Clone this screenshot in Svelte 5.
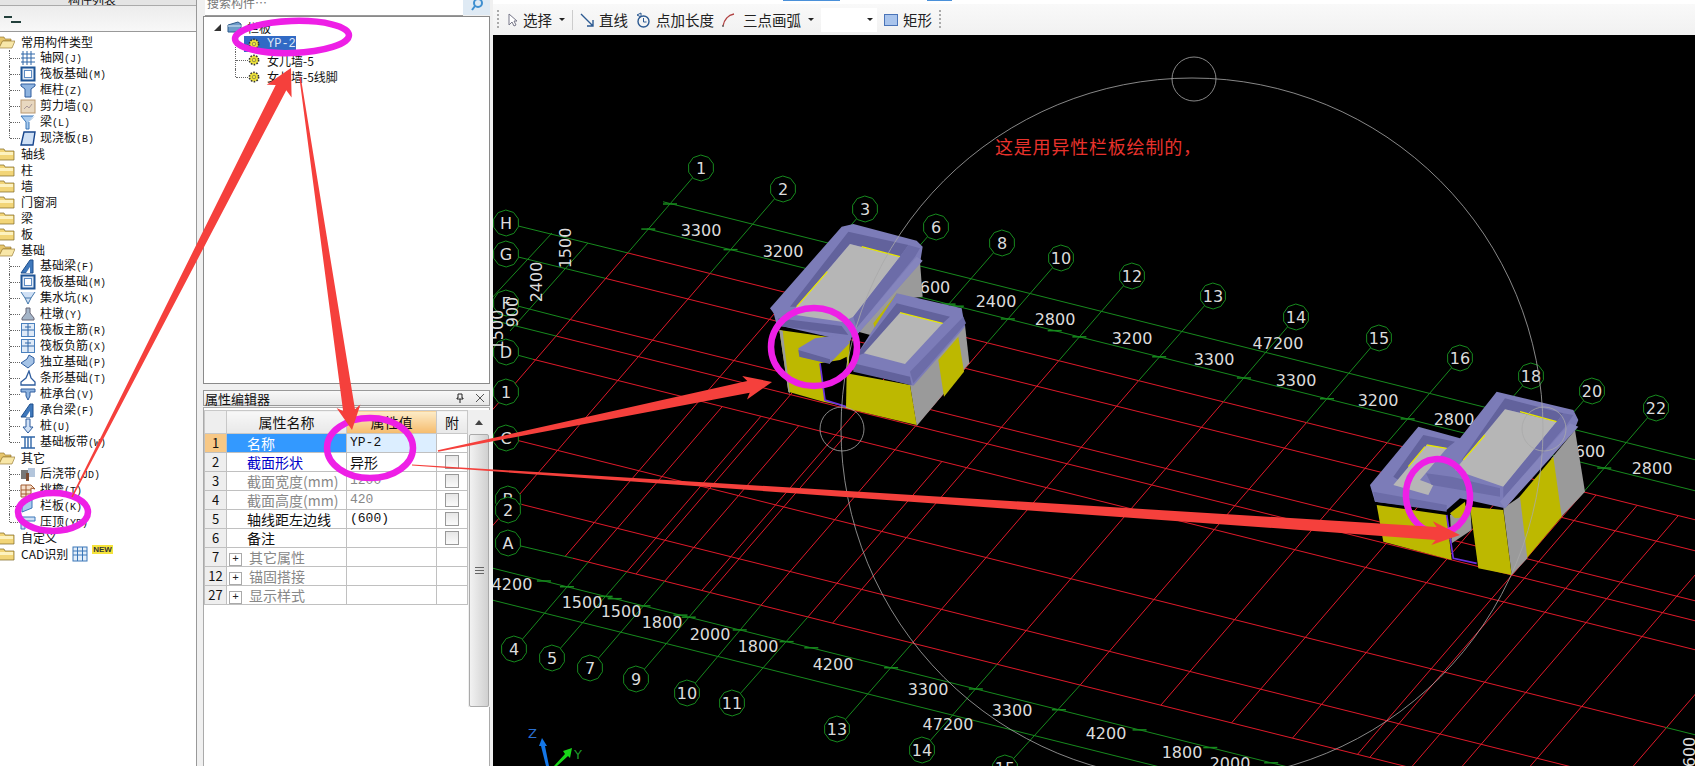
<script>
  const icons = {
    grid: '<path d="M3 1v14M7 1v14M11 1v14M1 4h14M1 8h14M1 12h14" stroke="#2f66a8" fill="none"/>',
    raft: '<rect x="1.5" y="1.5" width="13" height="13" fill="#dfe9f5" stroke="#1f5596" stroke-width="2"/><rect x="4.5" y="4.5" width="7" height="7" fill="#fff" stroke="#5d8cc4"/>',
    column: '<path d="M1 2h14v2l-4 3v8H5V7L1 4z" fill="#8fb4e0" stroke="#2f5d9e"/>',
    wall: '<rect x="1" y="2" width="14" height="13" fill="#e8d8c0" stroke="#b89870"/><path d="M4 11l3-3 2 2 3-4" stroke="#a99" fill="none"/>',
    beam: '<path d="M1 2h13L9 8v7H6V8z" fill="#a9cbee" stroke="#3a77b8"/><path d="M14 2L9 8" stroke="#fff"/>',
    slab: '<path d="M4 2h11l-2 13H1z" fill="#cfe0f5" stroke="#17458c" stroke-width="1.4"/>',
    fbeam: '<path d="M1 15L10 2h3v13z" fill="#3f78bb" stroke="#1f4f8c"/><path d="M6 15l4-6v6z" fill="#fff"/>',
    pit: '<path d="M1 2l4 6h6l4-6M5 8l3 6 3-6" fill="#cfe0f5" stroke="#4477aa"/>',
    pier: '<path d="M6 2h4v5l4 5v2H2v-2l4-5z" fill="#a5b5c8" stroke="#667"/>',
    rebar: '<rect x="1.5" y="1.5" width="13" height="13" fill="#dfeaf7" stroke="#4a80bd"/><path d="M8 2v12M2 8h12M5 5h6" stroke="#2f66a8" fill="none"/>',
    footing: '<path d="M1 9l6-4 2-4 5 3v5l-6 5z" fill="#a5c3e6" stroke="#2f5d9e"/>',
    strip: '<path d="M1 15v-3l5-4 3-7 2 7 4 4v3z" fill="#fff" stroke="#2f5d9e" stroke-width="1.3"/>',
    cap: '<path d="M1 3h14v3H10v4l-2 4-2-4V6H1z" fill="#8fb4e0" stroke="#2f5d9e"/>',
    pile: '<path d="M6 1h4v8h3l-5 6-5-6h3z" fill="#cfe0f5" stroke="#2f5d9e"/>',
    band: '<path d="M1 3h14M1 14h14M5 3v11M8 3v11M11 3v11" stroke="#2f66a8" fill="none" stroke-width="1.4"/>',
    pour: '<rect x="1" y="4" width="7" height="9" fill="#777"/><rect x="8" y="2" width="7" height="9" fill="#b4c6dc"/><rect x="6" y="7" width="3" height="8" fill="#7a4a30"/>',
    eave: '<path d="M1 3h10l4 4-4-1v9H1z" fill="#f6e0cc" stroke="#a05a30"/><path d="M1 8h10M1 12h10M6 3v12" stroke="#a05a30"/>',
    rail: '<path d="M2 14V6l10-4v8z" fill="#a9cbee" stroke="#3a77b8"/>',
    coping: '<path d="M1 3h14v4H5v8H1z" fill="#cfe0f5" stroke="#3a77b8"/>'
  };

  const tree = [
    { name: '常用构件类型', open: true, kids: [
      ['轴网', 'J', 'grid'], ['筏板基础', 'M', 'raft'], ['框柱', 'Z', 'column'],
      ['剪力墙', 'Q', 'wall'], ['梁', 'L', 'beam'], ['现浇板', 'B', 'slab']
    ] },
    { name: '轴线' }, { name: '柱' }, { name: '墙' }, { name: '门窗洞' }, { name: '梁' }, { name: '板' },
    { name: '基础', open: true, kids: [
      ['基础梁', 'F', 'fbeam'], ['筏板基础', 'M', 'raft'], ['集水坑', 'K', 'pit'], ['柱墩', 'Y', 'pier'],
      ['筏板主筋', 'R', 'rebar'], ['筏板负筋', 'X', 'rebar'], ['独立基础', 'P', 'footing'], ['条形基础', 'T', 'strip'],
      ['桩承台', 'V', 'cap'], ['承台梁', 'F', 'fbeam'], ['桩', 'U', 'pile'], ['基础板带', 'W', 'band']
    ] },
    { name: '其它', open: true, kids: [
      ['后浇带', 'JD', 'pour'], ['挑檐', 'T', 'eave'], ['栏板', 'K', 'rail'], ['压顶', 'YD', 'coping']
    ] },
    { name: '自定义' }
  ];

  const props = [
    { no: 1, name: '名称', value: 'YP-2', sel: true },
    { no: 2, name: '截面形状', value: '异形', blue: true, check: true },
    { no: 3, name: '截面宽度(mm)', value: '1200', grey: true, check: true },
    { no: 4, name: '截面高度(mm)', value: '420', grey: true, check: true },
    { no: 5, name: '轴线距左边线', value: '(600)', check: true },
    { no: 6, name: '备注', value: '', check: true },
    { no: 7, name: '其它属性', plus: true },
    { no: 12, name: '锚固搭接', plus: true },
    { no: 27, name: '显示样式', plus: true }
  ];

  // grid geometry: every line is read off the reference in page pixels
  const SLOPE = 1.16;
  const atC = (x560, c) => {
    const y = (c + 0.25 * (x560 + 560 / SLOPE - 1000)) / (1 + 0.25 / SLOPE);
    return [x560 - (y - 560) / SLOPE, y];
  };
  const hy = (c, x) => c + 0.25 * (x - 1000);

  const axes = [
    { n: '1', x: 363, top: [701, 168] }, { n: '2', x: 463, top: [783, 189] },
    { n: '3', x: 562, top: [865, 209] }, { n: '4', x: 590, bot: [514, 649] },
    { n: '5', x: 637, bot: [552, 658] }, { n: '6', x: 648, top: [936, 227] },
    { n: '7', x: 683, bot: [590, 668] }, { n: '8', x: 728, top: [1002, 243] },
    { n: '9', x: 738, bot: [636, 679] }, { n: '10', x: 800, top: [1061, 258], bot: [687, 693] },
    { n: '11', x: 857, bot: [732, 703] }, { n: '12', x: 887, top: [1132, 276] },
    { n: '13', x: 984, top: [1213, 296], bot: [837, 729] }, { n: '14', x: 1087, top: [1296, 317], bot: [922, 750] },
    { n: '15', x: 1188, top: [1379, 338], bot: [1005, 768] }, { n: '16', x: 1286, top: [1460, 358] },
    { n: '18', x: 1372, top: [1531, 376] }, { n: '20', x: 1446, top: [1592, 391] },
    { n: '22', x: 1525, top: [1656, 408] }, { x: 1540 }, { x: 1590 }, { x: 1640 }, { x: 1708 }, { x: 1811 }
  ];

  const rows = [
    { c: 346, from: 627, b: ['H', 506, 223] }, { c: 377, from: 605, b: ['G', 506, 254] },
    { c: 427, from: 570, b: ['F', 506, 303] }, { c: 447, from: 557, start: 493 },
    { c: 476, from: 533, b: ['D', 506, 352] }, { c: 561, from: 510, to: 1665, b: ['C', 506, 438] },
    { c: 624, from: 522, b: ['B', 508, 499] }, { c: 665, from: 573, b: ['A', 508, 543] }
  ];

  const reds = [];
  const greens = [];
  for (const a of axes) {
    const p = atC(a.x, a.top || a.x > 1530 ? 346 : 476);
    const q = atC(a.x, 665);
    reds.push([p, q]);
    if (a.top) greens.push([a.top, p]);
    if (a.bot) greens.push([q, a.bot]);
  }
  for (const r of rows) {
    const end = r.to ?? 1700;
    reds.push([[r.from, hy(r.c, r.from)], [end, hy(r.c, end)]]);
    if (r.to) greens.push([[r.to, hy(r.c, r.to)], [1700, hy(r.c, 1700)]]);
    if (r.b) greens.push([[r.b[1], r.b[2]], [r.from, hy(r.c, r.from)]]);
    else greens.push([[r.start, hy(r.c, r.start)], [r.from, hy(r.c, r.from)]]);
  }
  for (const [c, from] of [[286, 663], [317, 647], [695, 493], [727, 493]]) {
    greens.push([[from, hy(c, from)], [1700, hy(c, 1700)]]);
  }
  greens.push([[552, 233], [490, 300]], [[588, 243], [510, 331]]);

  const ticks = [[670, 204]];
  for (const a of axes) {
    for (const c of [317, 695]) {
      const [x, y] = atC(a.x, c);
      if (y < 766 && x > 493 && (a.top || a.bot)) ticks.push([x, y]);
    }
  }

  const bubbles = [
    ...axes.filter(a => a.top).map(a => ({ t: a.n, x: a.top[0], y: a.top[1] })),
    ...axes.filter(a => a.bot).map(a => ({ t: a.n, x: a.bot[0], y: a.bot[1] })),
    ...rows.filter(r => r.b).map(r => ({ t: r.b[0], x: r.b[1], y: r.b[2] })),
    { t: '2', x: 508, y: 510 }, { t: '1', x: 506, y: 392 }
  ];
  const ring = (x, y, r = 13) =>
    Array.from({ length: 10 }, (_, i) => {
      const t = (i / 10) * Math.PI * 2 + 0.3;
      return `${(x + r * Math.cos(t)).toFixed(1)},${(y + r * Math.sin(t)).toFixed(1)}`;
    }).join(' ');

  const dims = [
    ['3300', 701, 230], ['3200', 783, 251], ['600', 935, 287], ['2400', 996, 301], ['2800', 1055, 319],
    ['3200', 1132, 338], ['3300', 1214, 359], ['47200', 1278, 343], ['3300', 1296, 380], ['3200', 1378, 400],
    ['2800', 1454, 419], ['600', 1590, 451], ['2800', 1652, 468], ['4200', 512, 584], ['1500', 582, 602],
    ['1500', 621, 611], ['1800', 662, 622], ['2000', 710, 634], ['1800', 758, 646], ['4200', 833, 664],
    ['3300', 928, 689], ['47200', 948, 724], ['3300', 1012, 710], ['4200', 1106, 733], ['1800', 1182, 752],
    ['2000', 1230, 763]
  ];
  const sideDims = [['1500', 565, 248], ['2400', 536, 282], ['900', 512, 312], ['1500', 497, 330], ['600', 1689, 752]];

  // tapered annotation arrow, tail to tip
  const arrow = (x1, y1, x2, y2, tail, shaft, head, len) => {
    const d = Math.hypot(x2 - x1, y2 - y1);
    const ux = (x2 - x1) / d, uy = (y2 - y1) / d;
    const nx = -uy, ny = ux;
    const bx = x2 - ux * len, by = y2 - uy * len;
    const pt = (x, y, w) => `${(x + nx * w).toFixed(1)},${(y + ny * w).toFixed(1)}`;
    return [pt(x1, y1, tail / 2), pt(bx, by, shaft / 2), pt(bx - ux * 4, by - uy * 4, head / 2), `${x2},${y2}`,
      pt(bx - ux * 4, by - uy * 4, -head / 2), pt(bx, by, -shaft / 2), pt(x1, y1, -tail / 2)].join(' ');
  };
  const arrows = [
    arrow(72, 497, 291, 68, 1.5, 12, 28, 22),
    arrow(300, 77, 352, 430, 1.5, 12, 24, 20),
    arrow(438, 451, 772, 382, 1.5, 12, 24, 24),
    arrow(412, 465, 1460, 535, 1, 13, 24, 24)
  ];
</script>

{#snippet folder(open)}
  <svg class="folder" viewBox="0 0 16 14" width="16" height="14">
    {#if open}
      <path d="M0 2h5l1 2h6v2H4L1 12H0z" fill="#e6c66e" stroke="#8a6a20" stroke-width=".6" />
      <path d="M3.500 6H16l-3 7H0z" fill="#f8e7a8" stroke="#8a6a20" stroke-width=".6" />
    {:else}
      <path d="M0 2h5l1 2h9v9H0z" fill="#f2d578" stroke="#7d6420" stroke-width=".7" />
      <path d="M1 5h13v3H1z" fill="#fdf2c0" />
    {/if}
  </svg>
{/snippet}

{#snippet gear()}
  <svg class="gear" viewBox="0 0 12 12" width="12" height="12">
    <circle cx="6" cy="6" r="4.600" fill="#f3e83a" stroke="#333" stroke-width="1.600" stroke-dasharray="1.600 1.300" />
    <circle cx="6" cy="6" r="1.800" fill="#f3e83a" stroke="#555" stroke-width=".6" />
  </svg>
{/snippet}

<div class="page">
  <aside class="side">
    <div class="side-head"><span>构件列表</span></div>
    <div class="side-tool">
      <svg viewBox="0 0 18 10" width="18" height="10"><path d="M0 2h8M7 7h10" stroke="#23403c" stroke-width="2" /></svg>
    </div>
    <div class="tree">
      {#each tree as group}
        <div class="row">{@render folder(group.open)}<span class="label">{group.name}</span></div>
        {#if group.kids}
          {#each group.kids as kid, i}
            <div class="row child">
              <i class="conn" class:last={i === group.kids.length - 1}></i>
              <svg class="ico" viewBox="0 0 16 16" width="16" height="16">{@html icons[kid[2]]}</svg>
              <span class="kid">{kid[0]}<span class="key">({kid[1]})</span></span>
            </div>
          {/each}
        {/if}
      {/each}
      <div class="row">
        {@render folder(false)}<span class="label">CAD识别</span>
        <svg class="cad" viewBox="0 0 16 16" width="16" height="16">
          <rect x="1" y="1" width="14" height="14" fill="#e4eef9" stroke="#3a77b8" />
          <path d="M5.500 1v14M10.500 1v14M1 5h14M1 9h14" stroke="#3a77b8" />
        </svg>
        <span class="new">NEW</span>
      </div>
    </div>
  </aside>

  <section class="mid">
    <div class="search">
      <div class="search-box"><span>搜索构件…</span></div>
      <div class="search-btn">
        <svg viewBox="0 0 14 14" width="14" height="14"><circle cx="8" cy="3" r="4" fill="none" stroke="#3f8fd0" stroke-width="2" /><path d="M5 6l-3 4" stroke="#3f8fd0" stroke-width="2" /></svg>
      </div>
    </div>
    <div class="parts">
      <div class="part head">
        <span class="tri"></span>
        <svg viewBox="0 0 16 13" width="16" height="13"><path d="M1 4l10-3 3 2v8H1z" fill="#6f9cc9" stroke="#2c5a8a" /><path d="M1 5h13" stroke="#dcecf9" /></svg>
        <span>栏板</span>
      </div>
      <div class="part leaf"><i class="conn"></i><span class="sel">{@render gear()}<b>YP-2</b></span></div>
      <div class="part leaf"><i class="conn"></i>{@render gear()}<span class="tx-leaf">女儿墙-5</span></div>
      <div class="part leaf"><i class="conn last"></i>{@render gear()}<span class="tx-leaf">女儿墙-5线脚</span></div>
    </div>

    <div class="prop-title">
      <span>属性编辑器</span>
      <span class="pin">
        <svg viewBox="0 0 10 10" width="10" height="10"><path d="M3 1h4v4h1v1H2V5h1zM5 6v4" stroke="#222" fill="none" /></svg>
        <svg viewBox="0 0 10 10" width="10" height="10"><path d="M1 1l8 8M9 1l-8 8" stroke="#555" /></svg>
      </span>
    </div>
    <div class="prop-body">
      <table>
        <thead>
          <tr><th class="no"></th><th class="pname">属性名称</th><th class="pval">属性值</th><th class="att">附</th></tr>
        </thead>
        <tbody>
          {#each props as p}
            <tr>
              <td class="no" class:on={p.sel}>{p.no}</td>
              <td class="name" class:picked={p.sel} class:blue={p.blue} class:grey={p.grey || p.plus}>
                {#if p.plus}<span class="plus">+</span>{/if}<span class="nm">{p.name}</span>
              </td>
              <td class="val" class:on={p.sel} class:grey={p.grey} class:cn={p.value === '异形'}>{p.value ?? ''}</td>
              <td class="att">{#if p.check}<span class="box"></span>{/if}</td>
            </tr>
          {/each}
        </tbody>
      </table>
      <div class="scroll">
        <div class="up"><span></span></div>
        <div class="thumb"><i></i><i></i><i></i></div>
      </div>
    </div>
  </section>

  <main class="view">
    <div class="tabs"><i class="t1"></i><i class="t2"></i></div>
    <div class="tools">
      <span class="grip"></span>
      <svg class="t-cursor" viewBox="0 0 10 14" width="10" height="14"><path d="M1 1v11l3-3 2 4 2-1-2-4h3z" fill="#fff" stroke="#778" /></svg>
      <span class="tx">选择</span><span class="caret"></span><span class="sep"></span>
      <svg viewBox="0 0 14 14" width="14" height="14"><path d="M1 1l12 12M13 7v6H7" stroke="#2c5a92" fill="none" stroke-width="1.400" /></svg>
      <span class="tx">直线</span>
      <svg viewBox="0 0 16 16" width="16" height="16"><circle cx="8.500" cy="9.500" r="5.500" fill="none" stroke="#2c5a92" stroke-width="1.400" /><path d="M8.500 6v4h3M2 3l4-2v4z" stroke="#2c5a92" fill="none" /></svg>
      <span class="tx">点加长度</span>
      <svg viewBox="0 0 14 14" width="14" height="14"><path d="M2 13C3 7 7 2 13 1" stroke="#b04040" fill="none" stroke-width="1.400" /><circle cx="2" cy="13" r="1" fill="#666" /></svg>
      <span class="tx wide">三点画弧</span><span class="caret"></span>
      <span class="drop"><span class="caret"></span></span>
      <svg viewBox="0 0 14 12" width="14" height="12"><rect x=".5" y=".5" width="13" height="11" fill="#a9c4ec" stroke="#4a74b8" /></svg>
      <span class="tx">矩形</span>
      <span class="grip"></span>
    </div>

    <svg class="cad-view" viewBox="493 35 1202 731" width="1202" height="731">
      {#each reds as [a, b]}<line class="red" x1={a[0]} y1={a[1]} x2={b[0]} y2={b[1]} />{/each}
      {#each greens as [a, b]}<line class="green" x1={a[0]} y1={a[1]} x2={b[0]} y2={b[1]} />{/each}
      {#each ticks as [x, y]}<line class="tick" x1={x - 7} y1={y} x2={x + 7} y2={y} />{/each}

      {#each bubbles as b}
        <polygon class="bubble" points={ring(b.x, b.y)} />
        <text class="dim" x={b.x} y={b.y + 6}>{b.t}</text>
      {/each}
      {#each dims as [t, x, y]}<text class="dim" x={x} y={y + 6}>{t}</text>{/each}
      {#each sideDims as [t, x, y]}<text class="dim" transform="translate({x} {y}) rotate(-90)" y="6">{t}</text>{/each}

      <!-- first building, coordinates from a 3x crop at (740,200) -->
      <g transform="translate(740 200) scale(.33333)">
        <polygon class="gray" points="355,395 540,185 548,290 470,300 410,410" />
        <polygon class="yellow" points="400,370 470,280 478,345 410,405" />
        <polygon class="purple" points="90,325 305,80 340,72 530,122 548,140 540,190 350,405 330,400 105,345" />
        <polygon class="dark" points="150,320 325,95 505,135 480,170 330,132 170,320" />
        <polygon class="floor" points="170,320 330,132 480,170 340,350 300,370 150,345" />
        <path class="ytrim" d="M365 140L480 170M170 320L262 215" />
        <polygon class="dark2" points="340,350 480,170 505,135 540,145 525,170 350,385" />
        <polygon class="purple2" points="345,390 530,170 548,182 350,405" />
        <polygon class="yellow" points="118,390 330,420 320,620 250,605 145,575" />
        <polygon class="gray" points="118,390 128,392 150,582 145,575" />
        <polygon class="black" points="240,490 300,480 320,470 330,622 255,600" />
        <path class="violet" d="M240 490L255 600L325 622" />
        <polygon class="purple" points="100,335 305,365 340,400 330,425 110,375" />
        <polygon class="dark" points="115,355 305,378 325,405 115,378" />
        <polygon class="purple" points="175,445 225,415 300,405 330,428 270,490 180,470" />
        <polygon class="dark" points="175,450 270,478 270,492 178,470" />

        <polygon class="gray" points="510,555 675,375 688,490 530,678" />
        <polygon class="yellow" points="595,480 655,410 672,515 612,590" />
        <polygon class="yellow" points="320,520 510,555 530,675 318,625" />
        <polygon class="purple" points="340,480 470,280 665,325 675,380 520,557 340,510" />
        <polygon class="dark" points="345,470 470,310 630,350 608,370 480,338 372,460" />
        <polygon class="floor" points="372,460 480,338 608,370 495,492" />
        <path class="ytrim" d="M480 338L608 370" />
        <polygon class="dark" points="340,490 510,530 515,555 340,515" />
        <polygon class="dark2" points="510,515 670,350 678,370 520,550" />
      </g>

      <!-- second building, coordinates from a 3x crop at (1340,370) -->
      <g transform="translate(1340 370) scale(.33333)">
        <polygon class="gray" points="635,265 705,180 735,365 660,445" />
        <polygon class="yellow" points="535,385 640,260 665,440 560,565" />
        <polygon class="gray" points="490,415 540,380 562,565 515,615" />
        <polygon class="yellow" points="390,410 490,420 515,615 415,595" />
        <polygon class="yellow" points="110,405 320,435 335,570 130,515" />
        <polygon class="gray" points="330,435 390,400 395,480 335,520" />
        <polygon class="yellow" points="330,430 375,395 380,440 345,445" />
        <path class="violet" d="M320 435L340 565L410 580" />
        <polygon class="purple" points="90,345 235,170 360,205 470,65 700,120 715,150 705,175 495,415 360,385 320,420 105,395" />
        <polygon class="dark" points="365,270 495,85 670,130 650,155 495,118 385,265" />
        <polygon class="dark" points="160,320 250,195 345,215 320,235 260,225 175,330" />
        <polygon class="floor" points="345,300 495,118 650,155 490,350" />
        <polygon class="floor" points="160,345 260,225 320,235 240,330 280,345 265,375" />
        <path class="ytrim" d="M540 125L650 155M260 225L320 235M370 270L435 195M205 290L255 230" />
        <polygon class="dark2" points="258,310 335,320 480,355 480,380 275,345" />
        <polygon class="dark2" points="100,365 320,405 320,425 105,395" />
        <polygon class="dark2" points="490,350 650,155 670,130 700,135 680,165 490,385" />
        <polygon class="purple2" points="480,395 690,160 715,170 495,415" />
      </g>

      <circle class="arc" cx="1192" cy="429" r="351" />
      <circle class="arc" cx="1194" cy="79" r="22" />
      <circle class="arc" cx="1544" cy="429" r="22" />
      <circle class="arc" cx="842" cy="429" r="22" />

      <text class="note" x="995" y="154">这是用异性栏板绘制的，</text>

      <path class="z" d="M542 738l-3 8h2l5 20h3l-4-20h2z" />
      <path class="y" d="M572 748l-9 3 2 3-11 12h3l11-10 2 2z" />
      <text class="zl" x="528" y="738">Z</text>
      <text class="yl" x="574" y="759">Y</text>
    </svg>
  </main>

  <svg class="marks" viewBox="0 0 1695 766" width="1695" height="766">
    <ellipse class="ring" cx="292" cy="37" rx="57" ry="16" transform="rotate(-2 292 37)" />
    <ellipse class="ring" cx="370" cy="448" rx="43" ry="30" />
    <ellipse class="ring" cx="53" cy="512" rx="35" ry="19" />
    <ellipse class="ring" cx="814" cy="347" rx="43" ry="39" />
    <ellipse class="ring" cx="1438" cy="496" rx="32" ry="37" transform="rotate(-5 1438 496)" />
    {#each arrows as a}<polygon class="shot" points={a} />{/each}
  </svg>
</div>

<style>
  :global(body) {
    margin: 0;
    background: #f0f0f0;
  }

  .page {
    position: relative;
    display: flex;
    width: 1695px;
    height: 766px;
    overflow: hidden;
    background: #f0f0f0;
    font-family: "Noto Sans CJK SC", sans-serif;
    font-size: 12px;
    color: #111;
  }

  .side {
    flex: none;
    width: 197px;
    display: flex;
    flex-direction: column;
    box-sizing: border-box;
    border-right: 1px solid #999;
  }
  .side-head {
    height: 5px;
    padding-left: 68px;
    overflow: hidden;
    border-bottom: 1px solid #aaa;
    line-height: 0;
    margin-bottom: 0;
    background: #e4e4e4;
  }
  .side-tool {
    flex: none;
    height: 26px;
    display: flex;
    align-items: center;
    padding: 3px 0 0 4px;
    box-sizing: border-box;
    border-bottom: 1px solid #999;
    background: linear-gradient(#ececec, #f8f8f8);
  }
  .tree {
    flex: 1;
    background: #fff;
    padding-top: 2px;
  }
  .row {
    display: flex;
    align-items: center;
    height: 16px;
    line-height: 16px;
    white-space: nowrap;
  }
  .folder {
    flex: none;
    margin-left: -1px;
  }
  .label {
    margin-left: 6px;
  }
  .child {
    padding-left: 9px;
  }
  .conn {
    position: relative;
    flex: none;
    align-self: stretch;
    width: 10px;
    border-left: 1px dotted #666;
  }
  .conn::after {
    content: "";
    position: absolute;
    left: 0;
    right: 0;
    top: 8px;
    border-top: 1px dotted #666;
  }
  .conn.last {
    align-self: flex-start;
    height: 8px;
  }
  .ico {
    flex: none;
  }
  .kid {
    margin-left: 4px;
  }
  .key {
    font-family: "Liberation Mono", monospace;
    font-size: 10px;
  }
  .cad {
    margin-left: 4px;
  }
  .new {
    align-self: flex-start;
    margin: -1px 0 0 4px;
    padding: 0 1px;
    height: 9px;
    line-height: 9px;
    font-family: "Liberation Sans", sans-serif;
    font-size: 8px;
    font-weight: 700;
    background: #f5e33c;
    color: #333;
  }

  .mid {
    flex: none;
    width: 287px;
    margin-left: 6px;
    display: flex;
    flex-direction: column;
  }
  .search {
    flex: none;
    display: flex;
    height: 16px;
    padding-left: 2px;
    box-sizing: border-box;
  }
  .search-box {
    flex: 1;
    background: #fff;
    border-bottom: 1px solid #999;
    overflow: hidden;
    color: #777;
    padding-left: 2px;
    line-height: 6px;
    height: 15px;
  }
  .search-btn {
    flex: none;
    width: 27px;
    height: 15px;
    display: flex;
    justify-content: center;
    overflow: hidden;
    background: #dfeaf4;
  }
  .parts {
    flex: none;
    height: 368px;
    box-sizing: border-box;
    background: #fff;
    border: 1px solid #8a8a8a;
    padding: 2px 0 0 10px;
  }
  .part {
    display: flex;
    align-items: center;
    height: 16.500px;
    white-space: nowrap;
  }
  .head {
    gap: 4px;
  }
  .tri {
    width: 0;
    height: 0;
    margin-right: 2px;
    border-left: 7px solid transparent;
    border-bottom: 7px solid #333;
  }
  .leaf {
    padding-left: 21px;
  }
  .leaf .conn {
    width: 12px;
  }
  .gear {
    flex: none;
  }
  .tx-leaf {
    margin-left: 7px;
  }
  .sel {
    display: flex;
    align-items: center;
    margin-left: -4px;
    padding-left: 4px;
    height: 16px;
    background: #316ac5;
  }
  .sel b {
    margin-left: 7px;
    font-family: "Liberation Mono", monospace;
    font-weight: 400;
    color: #dfe8f6;
  }
  .prop-title {
    flex: none;
    margin-top: 6px;
    height: 16px;
    display: flex;
    justify-content: space-between;
    align-items: center;
    padding: 0 4px 0 1px;
    box-sizing: border-box;
    border: 1px solid #999;
    background: linear-gradient(#f8f8f8, #e6e6e6);
    font-size: 13px;
  }
  .pin {
    display: flex;
    gap: 10px;
  }
  .prop-body {
    flex: 1;
    margin-top: 1px;
    display: flex;
    align-items: flex-start;
    background: #fff;
    border: 1px solid #aaa;
    border-bottom: 0;
    padding-top: 2px;
  }
  table {
    flex: none;
    width: 263px;
    table-layout: fixed;
    border-collapse: collapse;
    font-size: 14px;
    line-height: 18px;
    background: #fff;
  }
  th {
    height: 22px;
    padding: 0;
    font-weight: 400;
    border: 1px solid #c8c8c8;
    background: linear-gradient(#f8f8f8, #e8e8e8);
  }
  td {
    height: 19px;
    box-sizing: border-box;
    padding: 0;
    border: 1px solid #c0c0c0;
    white-space: nowrap;
    overflow: hidden;
  }
  .no {
    width: 21px;
    text-align: center;
    background: #eee;
    font-size: 13px;
  }
  td.no.on {
    background: #f7c886;
  }
  .pname {
    width: 119px;
  }
  th.pval {
    width: 89px;
    background: linear-gradient(#fdecc8, #f5bb6c);
  }
  .att {
    width: 30px;
    text-align: center;
  }
  .name {
    padding-left: 20px;
  }
  .name.picked {
    background: #3399ff;
    color: #fff;
  }
  .name.blue {
    color: #0000c8;
  }
  .name.grey {
    color: #888;
  }
  .plus {
    display: inline-block;
    width: 11px;
    height: 11px;
    line-height: 10px;
    margin: 0 7px 0 -18px;
    text-align: center;
    border: 1px solid #aaa;
    color: #222;
    font-family: "Liberation Mono", monospace;
    font-size: 11px;
    vertical-align: 1px;
  }
  .val {
    padding-left: 3px;
    font-family: "Liberation Mono", monospace;
    font-size: 13px;
  }
  .val.cn {
    font-family: "Noto Sans CJK SC", sans-serif;
    font-size: 14px;
  }
  .val.on {
    background: #dceeff;
  }
  .val.grey {
    color: #888;
  }
  .box {
    display: inline-block;
    width: 12px;
    height: 12px;
    vertical-align: -1px;
    border: 1px solid #999;
    background: linear-gradient(#e6e6e6, #fafafa);
  }
  .scroll {
    flex: none;
    width: 22px;
    display: flex;
    flex-direction: column;
    align-items: center;
    background: #efefef;
  }
  .up {
    height: 24px;
    display: flex;
    align-items: center;
  }
  .up span {
    border: 4px solid transparent;
    border-top: 0;
    border-bottom: 5px solid #444;
  }
  .thumb {
    width: 18px;
    height: 271px;
    display: flex;
    flex-direction: column;
    justify-content: center;
    gap: 2px;
    align-items: center;
    border: 1px solid #aaa;
    border-radius: 2px;
    background: linear-gradient(90deg, #f2f2f2, #d0d0d0);
  }
  .thumb i {
    width: 9px;
    height: 1px;
    background: #666;
  }

  .view {
    flex: none;
    width: 1202px;
    margin-left: 3px;
    display: flex;
    flex-direction: column;
  }
  .tabs {
    height: 4px;
    position: relative;
    background: #fff;
  }
  .tabs i {
    position: absolute;
    top: 0;
    height: 1px;
    background: #4a90d9;
  }
  .t1 {
    left: 290px;
    width: 57px;
  }
  .t2 {
    left: 434px;
    width: 25px;
  }
  .tools {
    flex: none;
    height: 31px;
    box-sizing: border-box;
    display: flex;
    align-items: center;
    padding-left: 4px;
    background: linear-gradient(#f9f9f9, #f1f1f1);
    gap: 7px;
    font-size: 14.500px;
    color: #222;
  }
  .grip {
    width: 2px;
    height: 20px;
    background: repeating-linear-gradient(#aaa 0 2px, transparent 2px 4px);
  }
  .t-cursor {
    margin-left: 2px;
  }
  .tx {
    margin-left: -2px;
    white-space: nowrap;
  }
  .tx.wide {
    margin-left: 1px;
  }
  .caret {
    flex: none;
    border: 3px solid transparent;
    border-top: 3px solid #222;
    border-bottom: 0;
  }
  .sep {
    width: 1px;
    height: 20px;
    background: #ccc;
  }
  .drop {
    width: 56px;
    height: 24px;
    box-sizing: border-box;
    display: flex;
    align-items: center;
    justify-content: flex-end;
    padding-right: 4px;
    background: #fff;
  }
  .cad-view {
    display: block;
    flex: none;
    background: #000;
  }
  .red {
    stroke: #e01a2a;
    stroke-width: 1;
  }
  .green {
    stroke: #178a1e;
    stroke-width: 1;
  }
  .tick {
    stroke: #178a1e;
    stroke-width: 1.500;
  }
  .bubble {
    fill: #000;
    stroke: #178a1e;
  }
  .dim {
    font-family: "DejaVu Sans", sans-serif;
    font-size: 16px;
    fill: #dcdcdc;
    text-anchor: middle;
  }
  .gray { fill: #9a9a9a; }
  .yellow { fill: #bdb800; }
  .purple { fill: #7c7cb8; }
  .purple2 { fill: #8585bd; }
  .dark { fill: #62629c; }
  .dark2 { fill: #6c6ca8; }
  .floor { fill: #b6b6b6; }
  .black { fill: #000; }
  .ytrim {
    fill: none;
    stroke: #e6e600;
    stroke-width: 4;
  }
  .violet {
    fill: none;
    stroke: #6a30e0;
    stroke-width: 5;
  }
  .arc {
    fill: none;
    stroke: #aaa;
    stroke-width: 0.8;
  }
  .note {
    font-size: 18px;
    letter-spacing: 0.8px;
    fill: #e8322c;
  }
  .z { fill: #1477e8; }
  .y { fill: #19d619; }
  .zl {
    font-family: "DejaVu Sans", sans-serif;
    font-size: 13px;
    fill: #2a6fd0;
  }
  .yl {
    font-family: "DejaVu Sans", sans-serif;
    font-size: 13px;
    fill: #1e9c2a;
  }

  .marks {
    position: absolute;
    left: 0;
    top: 0;
    pointer-events: none;
  }
  .ring {
    fill: none;
    stroke: #ee1fe6;
    stroke-width: 6.500;
  }
  .shot {
    fill: #f5403c;
  }
</style>
